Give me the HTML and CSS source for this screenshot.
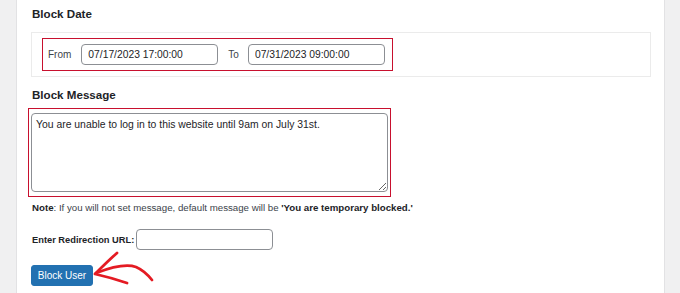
FILE: index.html
```html
<!DOCTYPE html>
<html lang="en">

<head>
  <meta charset="UTF-8">
  <title>Block User</title>
  <link rel="stylesheet" href="styles.css">
</head>

<body>
  <div class="panel">
    <h3 class="section-title">Block Date</h3>
    <div class="date-box">
      <div class="highlight date-row">
        <label class="field-label">From</label>
        <input type="text" class="text-input" value="07/17/2023 17:00:00">
        <label class="field-label to-label">To</label>
        <input type="text" class="text-input" value="07/31/2023 09:00:00">
      </div>
    </div>

    <h3 class="section-title msg-title">Block Message</h3>
    <div class="highlight msg-wrap">
      <textarea class="msg-input">You are unable to log in to this website until 9am on July 31st.</textarea>
    </div>

    <p class="note"><b>Note</b>: If you will not set message, default message will be <b>'You are temporary blocked.'</b></p>

    <div class="url-row">
      <label class="url-label">Enter Redirection URL:</label>
      <input type="text" class="text-input url-input">
    </div>

    <div class="submit-row">
      <button class="btn-primary">Block User</button>
      <!-- annotation arrow -->
      <svg class="arrow" width="70" height="40" viewBox="0 0 70 40">
        <path d="M5 24 C 18 19, 34 14, 45 18 C 52 21, 57 26, 61 31" fill="none" stroke="#e41b23" stroke-width="2.8" stroke-linecap="round"/>
        <path d="M26 4 C 18 11, 11 18, 4 25 C 13 27, 24 30, 36 34" fill="none" stroke="#e41b23" stroke-width="2.8" stroke-linecap="round" stroke-linejoin="round"/>
      </svg>
    </div>
  </div>
</body>

</html>
```

FILE: styles.css
```css
body {
  margin: 0;
  background: #f0f0f1;
  font-family: 'Liberation Sans', Arial, sans-serif;
  color: #1d2327;
  font-size: 10px;
}

.panel {
  margin-left: 16px;
  width: 633px;
  height: 289px;
  background: #fff;
  border-left: 1px solid #e2e2e4;
  border-right: 1px solid #e2e2e4;
  padding: 4px 0 0 14px;
}

.section-title {
  margin: 0;
  font-size: 11.6px;
  line-height: 20px;
  font-weight: bold;
  padding-left: 1px;
}

.date-box {
  margin-top: 8px;
  width: 598px;
  border: 1px solid #ebebeb;
  padding: 5px 10px;
}

.highlight {
  border: 1px solid #c8102e;
}

.date-row {
  display: inline-flex;
  align-items: center;
  padding: 5px 7px 5px 5px;
}

.field-label {
  color: #3c434a;
  font-size: 10px;
  margin-right: 10px;
}

.to-label {
  margin-left: 10px;
  margin-right: 9px;
}

.text-input {
  width: 137px;
  height: 21px;
  box-sizing: border-box;
  border: 1px solid #8c8f94;
  border-radius: 4px;
  padding: 0 6px;
  font-family: inherit;
  font-size: 10.3px;
  color: #1d2327;
  background: #fff;
}

.msg-title {
  margin-top: 8px;
}

.msg-wrap {
  margin-top: 3px;
  margin-left: -3px;
  width: 358px;
  height: 79px;
  padding: 4px 1px 4px 2px;
}

.msg-input {
  display: block;
  width: 357px;
  height: 79px;
  box-sizing: border-box;
  border: 1px solid #8c8f94;
  border-radius: 4px;
  padding: 4px 4px;
  font-family: inherit;
  font-size: 10.4px;
  line-height: 14px;
  color: #1d2327;
  resize: vertical;
}

.note {
  margin: 2px 0 0 1px;
  font-size: 9.7px;
  line-height: 18px;
  color: #3c434a;
}

.note b {
  color: #1d2327;
}

.url-row {
  display: flex;
  align-items: center;
  margin-top: 12px;
  padding-left: 1px;
}

.url-label {
  font-size: 9.3px;
  font-weight: bold;
  margin-right: 2px;
}

.url-input {
  height: 21px;
}

.submit-row {
  position: relative;
  margin-top: 15px;
}

.btn-primary {
  width: 62px;
  height: 21px;
  padding: 0;
  border: 1px solid #2271b1;
  border-radius: 3px;
  background: #2271b1;
  color: #fff;
  font-family: inherit;
  font-size: 10px;
}

.arrow {
  position: absolute;
  left: 60px;
  top: -16px;
}
```
